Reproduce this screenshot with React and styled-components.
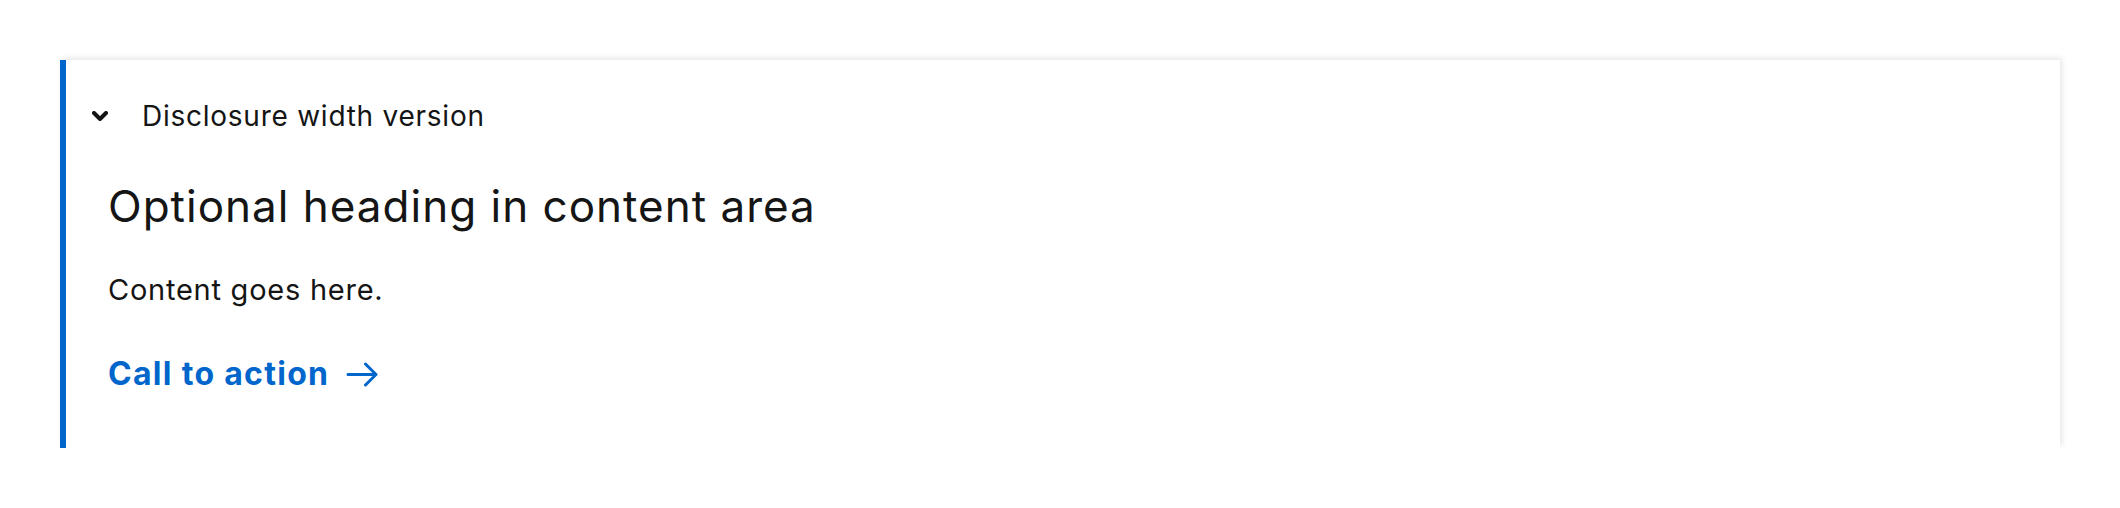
import React from 'react';
import styled, { createGlobalStyle } from 'styled-components';

const GlobalStyle = createGlobalStyle`
    body {
        margin: 0;
        background: #ffffff;
        font-family: Inter, "Noto Sans", sans-serif;
        color: #151515;
    }
`;

const Page = styled.main`
    padding: 60px 60px 0 60px;
`;

const Disclosure = styled.details`
    border-left: 6px solid #0066cc;
    background-color: #ffffff;
    box-shadow: 2px -2px 6px rgba(0, 0, 0, 0.1);
    padding-bottom: 51px;
`;

const Summary = styled.summary`
    display: flex;
    align-items: center;
    gap: 34px;
    padding: 35px 26px 0;
    list-style: none;
    cursor: pointer;
    font-size: 28px;
    line-height: 42px;
    letter-spacing: 0.75px;

    &::-webkit-details-marker {
        display: none;
    }
`;

const Content = styled.div`
    padding: 43px 42px 0;
`;

const Heading = styled.h2`
    margin: 0;
    font-weight: 400;
    font-size: 44px;
    line-height: 1.2;
    letter-spacing: 1px;
`;

const Text = styled.p`
    margin: 35px 0 0;
    font-size: 29px;
    line-height: 1.5;
    letter-spacing: 0.75px;
`;

const Cta = styled.a`
    display: inline-flex;
    align-items: center;
    gap: 17px;
    margin-top: 41px;
    font-weight: 700;
    font-size: 32px;
    line-height: 1.4;
    letter-spacing: 1.3px;
    color: #0066cc;
    text-decoration: none;
`;

const Chevron = () => (
    <svg width="16" height="10" viewBox="0 0 16 10" fill="none">
        <polyline points="2,2 8,8 14,2" stroke="#151515" strokeWidth="4" strokeLinecap="round" strokeLinejoin="round" />
    </svg>
);

const Arrow = () => (
    <svg width="33" height="25" viewBox="0 0 33 25" fill="none">
        <path d="M2 12.5 H30 M19.5 2 L30 12.5 L19.5 23" stroke="#0066cc" strokeWidth="3" strokeLinecap="round" strokeLinejoin="round" />
    </svg>
);

const App = () => {
    return (
        <Page>
            <GlobalStyle />
            <Disclosure open>
                <Summary>
                    <Chevron />
                    Disclosure width version
                </Summary>
                <Content>
                    <Heading>Optional heading in content area</Heading>
                    <Text>Content goes here.</Text>
                    <Cta href="#">
                        Call to action
                        <Arrow />
                    </Cta>
                </Content>
            </Disclosure>
        </Page>
    );
};

export default App;
